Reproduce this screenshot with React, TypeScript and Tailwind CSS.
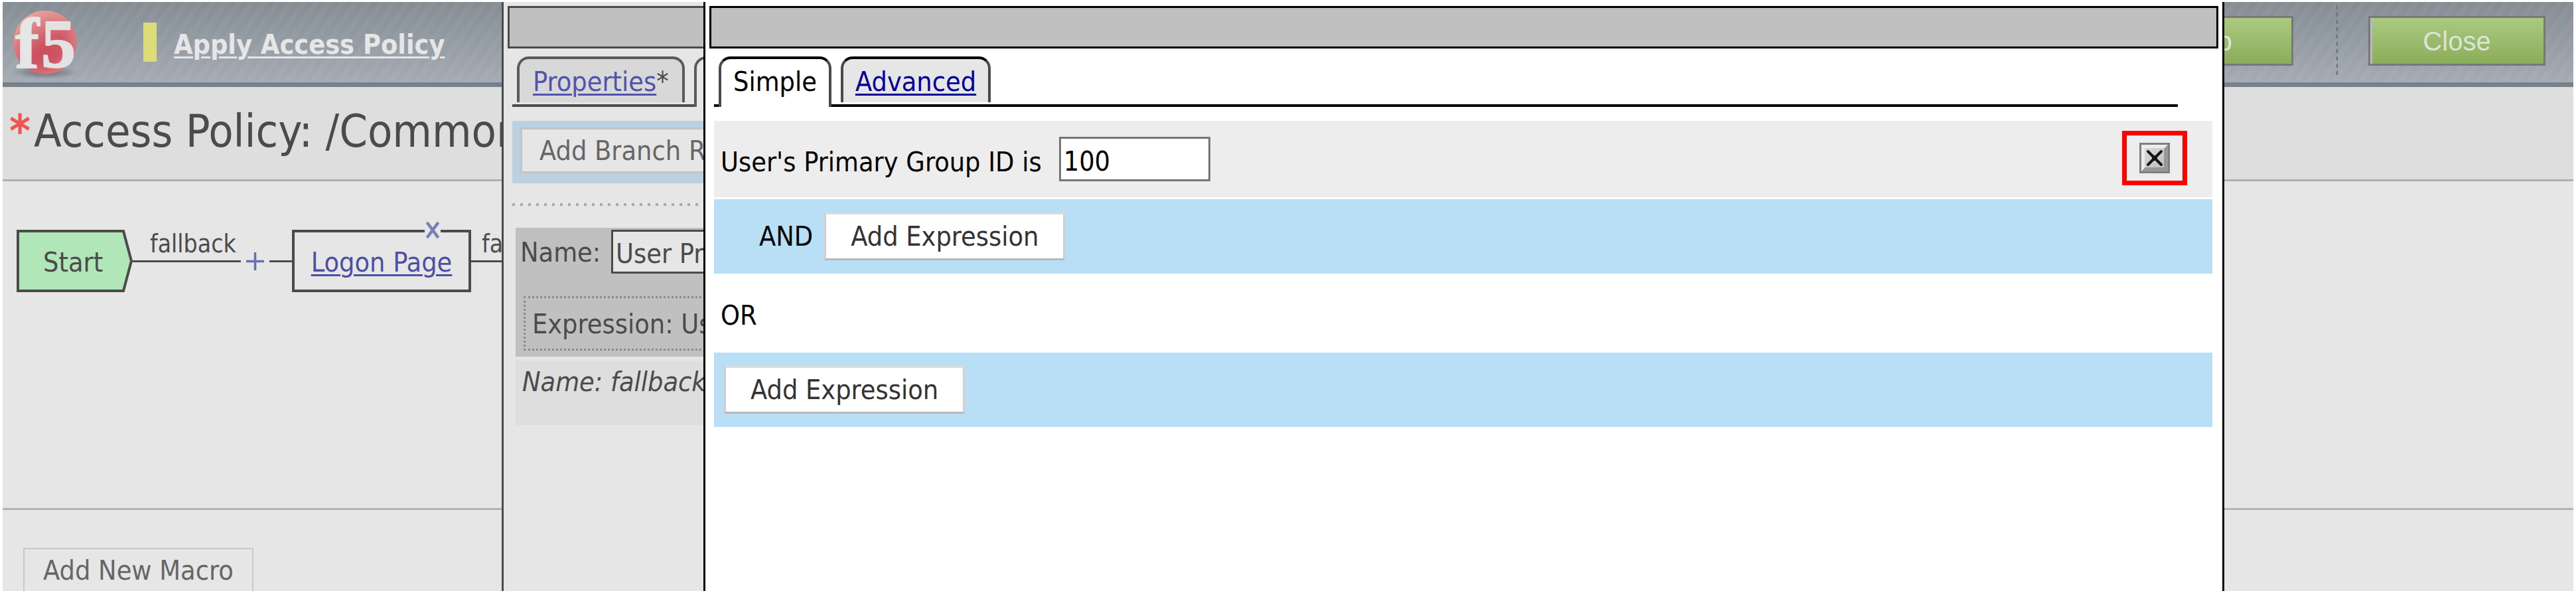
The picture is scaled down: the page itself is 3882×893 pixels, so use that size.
import React from "react";

function Logo() {
  return (
    <svg className="overflow-visible" width="108" height="116" viewBox="0 0 108 116" role="img" aria-label="f5">
      <defs>
        <radialGradient id="ball" cx="0.42" cy="0.5" r="0.62">
          <stop offset="0" stopColor="#c94a5c" />
          <stop offset="0.55" stopColor="#cf5564" />
          <stop offset="0.85" stopColor="#d8737a" />
          <stop offset="1" stopColor="#c9898f" />
        </radialGradient>
        <radialGradient id="shade">
          <stop offset="0" stopColor="#5f666e" stopOpacity="0.9" />
          <stop offset="1" stopColor="#5f666e" stopOpacity="0" />
        </radialGradient>
        <linearGradient id="shine" x1="0.1" y1="0" x2="0.5" y2="0.6">
          <stop offset="0" stopColor="#f3c3b4" stopOpacity="0.8" />
          <stop offset="1" stopColor="#f3c3b4" stopOpacity="0" />
        </linearGradient>
      </defs>
      <ellipse cx="58" cy="106" rx="50" ry="10" fill="url(#shade)" />
      <circle cx="58" cy="61" r="48" fill="url(#ball)" />
      <circle cx="58" cy="61" r="48" fill="url(#shine)" />
      <text x="13" y="99" fontFamily="'Liberation Serif', serif" fontWeight="bold" fontSize="108" fill="#e6e6e6" stroke="#e6e6e6" strokeWidth="2">
        f
      </text>
      <text x="52" y="98" fontFamily="'Liberation Serif', serif" fontWeight="bold" fontSize="104" fill="#e2e2e2" stroke="#e2e2e2" strokeWidth="2">
        5
      </text>
    </svg>
  );
}

function HeaderButton({ children }: { children: React.ReactNode }) {
  return (
    <button
      type="button"
      className="h-[75px] w-[267px] border-3 border-[#787878] bg-linear-to-b from-[#abca80] to-[#8aad5a] font-['Liberation_Sans',sans-serif] text-[40px] leading-[48px] text-[#dde4d5] shadow-[inset_3px_0_0_#b4bcc0]"
    >
      {children}
    </button>
  );
}

function Header() {
  return (
    <header className="flex h-32 shrink-0 items-start border-b-7 border-[#77818b] bg-[repeating-linear-gradient(125deg,rgba(255,255,255,0.03)_0px,rgba(255,255,255,0.03)_8px,transparent_8px,transparent_16px),linear-gradient(to_bottom,#858d94,#a4abb3)] pr-[42px] pl-[6px]">
      <Logo />
      <span className="mt-[31px] ml-[98px] h-[59px] w-5 bg-[#dcdc78]" />
      <a
        href="#apply"
        className="mt-10 ml-[26px] text-[41px] leading-[48px] font-bold text-[#e6e6e6] underline decoration-3 underline-offset-4"
      >
        Apply Access Policy
      </a>
      <div className="mt-[21px] ml-auto flex">
        <HeaderButton>Help</HeaderButton>
      </div>
      <span className="mr-[46px] ml-[65px] h-[114px] w-[2px] bg-[repeating-linear-gradient(to_bottom,transparent_0px,transparent_5px,#66707a_5px,#66707a_11px)]" />
      <div className="mt-[21px] flex">
        <HeaderButton>Close</HeaderButton>
      </div>
    </header>
  );
}

function PolicyDiagram() {
  return (
    <div className="flex pt-[73px] pl-[21px] text-[#4b4b4b]">
      <div className="relative h-[94px] w-[175px]">
        <svg className="absolute inset-0" width="175" height="94" viewBox="0 0 175 94">
          <path d="M2 2H161L173 47L161 92H2Z" fill="#b0e6b8" stroke="#4b4b4b" strokeWidth="4" />
        </svg>
        <span className="relative block pt-[25px] pl-10 text-[41px] leading-[48px]">Start</span>
      </div>
      <div className="relative h-[94px] w-60">
        <span className="block pl-[26px] text-[37px] leading-[44px]">fallback</span>
        <div className="absolute inset-0 flex items-center">
          <span className="h-[3px] flex-1 bg-[#4b4b4b]" />
          <svg className="mx-2" width="27" height="27" viewBox="0 0 27 27">
            <path d="M13.5 0V27M0 13.5H27" stroke="#6470b0" strokeWidth="3.5" />
          </svg>
          <span className="h-[3px] w-[34px] bg-[#4b4b4b]" />
        </div>
      </div>
      <div className="relative h-[94px] w-[270px] border-4 border-[#4b4b4b]">
        <a
          href="#logon"
          className="block pt-[21px] text-center text-[41px] leading-[48px] text-[#4c50a4] underline decoration-3 underline-offset-4"
        >
          Logon Page
        </a>
        <button
          type="button"
          aria-label="Remove Logon Page"
          className="absolute -top-4 right-[42px] bg-[#e6e6e6] px-[2px]"
        >
          <svg width="20" height="25" viewBox="0 0 20 25">
            <path d="M1.500 1L18.500 24M18.500 1L1.500 24" stroke="#7880b8" strokeWidth="4.500" />
          </svg>
        </button>
      </div>
      <div className="relative h-[94px] w-60">
        <span className="block pl-[16px] text-[37px] leading-[44px]">fallback</span>
        <div className="absolute inset-0 flex items-center">
          <span className="h-[3px] flex-1 bg-[#4b4b4b]" />
        </div>
      </div>
    </div>
  );
}

function Page() {
  return (
    <div className="flex min-h-0 flex-1 flex-col overflow-hidden bg-[#e6e6e6]">
      <Header />
      <h1 className="flex h-[142px] shrink-0 border-b-3 border-[#b0b0b0] bg-[#dedede] pt-[27px] pl-[10px] text-[68px] leading-[80px] whitespace-nowrap text-[#4b4b4b]">
        <span className="mr-[5px] font-bold text-[#f05454]">*</span>
        Access Policy: /Common
      </h1>
      <section className="h-[495px] shrink-0 border-b-3 border-[#b3b3b3]">
        <PolicyDiagram />
      </section>
      <section className="pt-[57px] pl-[31px]">
        <button
          type="button"
          className="h-[72px] border-2 border-b-3 border-[#c8c8c8] px-[28px] pb-1 text-[41px] leading-[44px] text-[#666]"
        >
          Add New Macro
        </button>
      </section>
    </div>
  );
}

function EditorDialog() {
  return (
    <div className="absolute top-[3px] right-[530px] bottom-[3px] left-[756px] overflow-hidden border-x-3 border-[#4b4b4b] bg-[#e6e6e6] px-[6px] pt-[6px] text-[#4b4b4b]">
      <div className="h-16 border-3 border-[#4b4b4b] bg-[#c0c0c0]" />
      <nav className="mt-3 mr-[52px] ml-[7px] flex h-[76px]">
        <span className="w-[7px] border-b-4 border-[#4b4b4b]" />
        <div className="border-b-4 border-[#4b4b4b]">
          <div className="h-[69px] rounded-t-[18px] border-x-4 border-t-4 border-[#5a5a5a] bg-[#d8d8d8] px-5 pt-[10px] text-[41px] leading-[48px]">
            <a href="#properties" className="text-[#5054ac] underline decoration-3 underline-offset-4">
              Properties
            </a>
            *
          </div>
        </div>
        <span className="w-[14px] border-b-4 border-[#4b4b4b]" />
        <div className="rounded-t-[18px] border-x-4 border-t-4 border-[#5a5a5a] px-5 pt-[10px] text-[41px] leading-[48px]">
          Branch Rules
        </div>
        <span className="flex-1 border-b-4 border-[#4b4b4b]" />
      </nav>
      <div className="mt-[21px] ml-[7px] h-[94px] bg-[#bbd1e1] pt-[10px] pl-3">
        <button
          type="button"
          className="h-[69px] border-3 border-[#c4c4c4] bg-[#e6e6e6] px-[26px] text-[41px] leading-[48px] text-[#666]"
        >
          Add Branch Rule
        </button>
      </div>
      <div className="mt-[30px] ml-[7px] h-[4px] bg-[repeating-linear-gradient(to_right,#a8a8a8_0px,#a8a8a8_4px,transparent_4px,transparent_12px)]" />
      <div className="mt-[33px] ml-3 h-[194px] bg-[#c0c0c0] pt-[3px]">
        <div className="flex pl-[7px]">
          <label htmlFor="rule-name" className="w-[137px] pt-[10px] text-[41px] leading-[48px]">
            Name:
          </label>
          <input
            id="rule-name"
            defaultValue="User Primary Group"
            className="h-[66px] w-[600px] border-3 border-[#4b4b4b] bg-[#e6e6e6] pt-[6px] pl-1 text-[41px]"
          />
        </div>
        <div className="mt-[34px] mr-3 ml-3 h-[82px] border-3 border-dotted border-[#8c8c8c] pt-[15px] pl-[10px] text-[41px] leading-[48px] whitespace-nowrap">
          Expression: User&apos;s Primary Group ID is 100
        </div>
      </div>
      <div className="mt-[6px] ml-3 h-[97px] bg-[#dedede] pt-2 pl-[10px] text-[41px] leading-[48px] italic">
        Name: fallback
      </div>
    </div>
  );
}

function AddExpression() {
  return (
    <button
      type="button"
      className="h-[72px] border-3 border-t-[#dcdcdc] border-r-[#cfcfcf] border-b-[#b8b8b8] border-l-[#cfcfcf] bg-white px-[37px] text-[41px] leading-[48px] text-[#333]"
    >
      Add Expression
    </button>
  );
}

function DeleteIcon() {
  return (
    <svg width="46" height="46" viewBox="0 0 46 46">
      <defs>
        <linearGradient id="bevel" x1="0" y1="0" x2="1" y2="1">
          <stop offset="0" stopColor="#dcdcdc" />
          <stop offset="1" stopColor="#bcbcbc" />
        </linearGradient>
      </defs>
      <rect x="1.5" y="1.5" width="43" height="43" fill="url(#bevel)" stroke="#808080" strokeWidth="3" />
      <path d="M3 3H43L38 8H8V38L3 43Z" fill="#ececec" />
      <path d="M43 3V43H3L9 37H37V9Z" fill="#989898" />
      <path d="M13 13L33 33M33 13L13 33" stroke="#141414" strokeWidth="4" strokeLinecap="round" />
      <circle cx="23" cy="23" r="4" fill="#141414" />
    </svg>
  );
}

function ExpressionDialog() {
  return (
    <div className="absolute top-[3px] right-[530px] bottom-[3px] left-[1060px] border-x-3 border-black bg-white px-[6px] pt-[6px] text-black">
      <div className="h-16 border-3 border-black bg-[#c0c0c0]" />
      <nav className="mt-3 mr-[61px] ml-[7px] flex h-[76px]">
        <span className="w-[7px] border-b-4 border-black" />
        <button
          type="button"
          className="flex rounded-t-[18px] border-x-4 border-t-4 border-x-[#4a4a4a] border-t-black px-[18px] pt-[10px] text-[41px] leading-[48px]"
        >
          Simple
        </button>
        <span className="w-[14px] border-b-4 border-black" />
        <div className="border-b-4 border-black">
          <div className="h-[69px] rounded-t-[18px] border-x-4 border-t-4 border-x-[#4a4a4a] border-t-black bg-[#e6e6e6] px-[18px] pt-[10px] text-[41px] leading-[48px]">
            <a href="#advanced" className="text-[#000099] underline decoration-3 underline-offset-4">
              Advanced
            </a>
          </div>
        </div>
        <span className="flex-1 border-b-4 border-black" />
      </nav>
      <div className="mt-[21px] mr-[9px] ml-[7px]">
        <div className="flex h-[115px] items-center bg-[#ededed] pl-[10px]">
          <label htmlFor="group-id" className="pt-2 text-[41px] leading-[48px]">
            User&apos;s Primary Group ID is
          </label>
          <input
            id="group-id"
            defaultValue="100"
            className="ml-[26px] h-[67px] w-[228px] border-3 border-[#767676] bg-white pt-[6px] pl-1 text-[41px]"
          />
          <div className="mr-[38px] mb-1 ml-auto flex h-[82px] w-[98px] items-center justify-center border-7 border-[#ff0000]">
            <button type="button" aria-label="Delete expression">
              <DeleteIcon />
            </button>
          </div>
        </div>
        <div className="mt-[3px] flex h-[112px] items-center bg-[#b9dff6] pl-[68px]">
          <span className="mr-[17px] text-[41px] leading-[48px]">AND</span>
          <AddExpression />
        </div>
        <div className="h-[119px] pt-[39px] pl-[10px] text-[41px] leading-[48px]">OR</div>
        <div className="flex h-[112px] items-center bg-[#b9dff6] pl-[15px]">
          <AddExpression />
        </div>
      </div>
    </div>
  );
}

export default function App() {
  return (
    <div className="relative flex h-screen flex-col overflow-hidden bg-white px-1 py-[3px] font-['DejaVu_Sans_Condensed','Noto_Sans',sans-serif]">
      <Page />
      <EditorDialog />
      <ExpressionDialog />
    </div>
  );
}
